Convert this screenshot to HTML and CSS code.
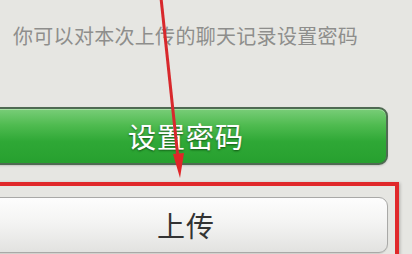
FILE: index.html
```html
<!DOCTYPE html>
<html lang="zh-CN">
<head>
<meta charset="utf-8">
<link rel="stylesheet" href="styles.css">
</head>
<body>
<div class="page">
  <p class="hint">你可以对本次上传的聊天记录设置密码</p>
  <button class="btn btn-green">设置密码</button>
  <button class="btn btn-white">上传</button>
  <div class="mark-box"></div>
  <svg class="mark-arrow" width="412" height="254" viewBox="0 0 412 254">
    <line x1="161" y1="-2" x2="178" y2="158" stroke="#d8282c" stroke-width="3"/>
    <polygon points="173,154 184,153 180,178" fill="#e02628"/>
  </svg>
</div>
</body>
</html>
```
FILE: styles.css
```css
html, body {
  margin: 0;
  padding: 0;
}
body {
  background: #e6e6e2;
  font-family: "Noto Sans CJK SC", "Noto Sans", sans-serif;
  overflow: hidden;
}
.page {
  position: relative;
  width: 412px;
  height: 254px;
  overflow: hidden;
  display: flex;
  flex-direction: column;
  align-items: flex-start;
}
.hint {
  margin: 21px 0 0 13px;
  font-size: 20px;
  letter-spacing: 0.3px;
  line-height: 30px;
  color: #8e8e8c;
}
.btn {
  font-family: "Noto Sans CJK SC", "Noto Sans", sans-serif;
  margin-left: -16px;
  width: 404px;
  font-size: 28px;
  letter-spacing: 1px;
  border-radius: 9px;
  padding: 0;
  display: flex;
  align-items: center;
  justify-content: center;
  box-sizing: border-box;
}
.btn-green {
  margin-top: 56px;
  height: 58px;
  color: #ffffff;
  border: 2px solid #4f6a52;
  background: linear-gradient(#79cd78 0%, #4fbb50 30%, #2fa836 60%, #27a02f 100%);
  box-shadow: inset 0 1px 0 #a6e0a4, 0 1px 2px rgba(0,0,0,0.15);
  text-shadow: 0 1px 2px rgba(0,60,0,0.8), 0 0 1px rgba(255,255,255,0.6);
}
.btn-white {
  margin-top: 32px;
  height: 56px;
  color: #333333;
  border: 1.5px solid #a9a9a7;
  background: linear-gradient(#fdfdfd 0%, #f4f4f3 45%, #e2e2e0 100%);
  box-shadow: 0 1px 1px rgba(0,0,0,0.1);
}
.mark-box {
  position: absolute;
  left: -12px;
  top: 182px;
  width: 403px;
  height: 100px;
  border: 4px solid #e0282a;
  box-shadow: 1px 1px 3px rgba(0,0,0,0.25);
}
.mark-arrow {
  position: absolute;
  left: 0;
  top: 0;
}
```
